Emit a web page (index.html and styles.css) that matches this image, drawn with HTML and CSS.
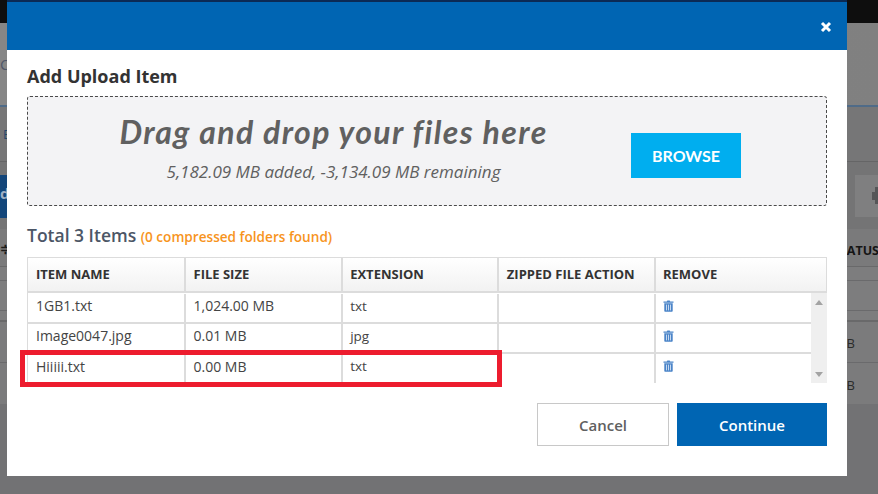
FILE: index.html
```html
<!DOCTYPE html>
<html lang="en">
<head>
<meta charset="utf-8">
<title>Add Upload Item</title>
<link rel="stylesheet" href="styles.css">
</head>
<body>
<div class="backdrop">
  <div class="band b-top"></div>
  <div class="band b-nav"><span class="bg-c">C</span></div>
  <div class="band b-tabs"><span class="bg-e">E</span></div>
  <div class="band b-tools">
    <div class="bg-btn">d</div>
    <div class="bg-tool"><svg class="bg-print" viewBox="0 0 12 17"><path d="M3 0 H9 V5 H12 V13 H9 V17 H3 V13 H0 V5 H3 Z"/></svg></div>
  </div>
  <div class="band b-head"><span class="bg-sort">≑</span><span class="bg-status">STATUS</span></div>
  <div class="band b-r1"></div>
  <div class="band b-r2"></div>
  <div class="band b-r3"></div>
  <div class="band b-r4"><span></span><span class="bg-b">B</span></div>
  <div class="band b-r5"><span></span><span class="bg-b">B</span></div>
</div>
<div class="top-edge"></div>
<div class="modal">
  <header class="modal-head">
    <svg class="close" viewBox="0 0 12 12" aria-label="Close"><path d="M2 2 L10 10 M10 2 L2 10"/></svg>
  </header>
  <div class="modal-body">
    <h2 class="title">Add Upload Item</h2>
    <section class="drop">
      <div class="drop-text">
        <div class="drop-main">Drag and drop your files here</div>
        <div class="drop-sub">5,182.09 MB added, -3,134.09 MB remaining</div>
      </div>
      <button class="browse">BROWSE</button>
    </section>
    <div class="total">Total 3 Items <span class="found">(0 compressed folders found)</span></div>
    <div class="table">
      <div class="row head">
        <div class="cell c1">ITEM NAME</div>
        <div class="cell c2">FILE SIZE</div>
        <div class="cell c3">EXTENSION</div>
        <div class="cell c4">ZIPPED FILE ACTION</div>
        <div class="cell c5">REMOVE</div>
      </div>
      <div class="scroll-wrap">
        <div class="rows">
          <div class="row">
            <div class="cell c1">1GB1.txt</div>
            <div class="cell c2">1,024.00 MB</div>
            <div class="cell c3 ext">txt</div>
            <div class="cell c4"></div>
            <div class="cell c5"><svg class="trash" viewBox="0 0 11 12"><path d="M3.8 1.6 L4.3.5 H6.7 L7.2 1.6 H10.5 V2.7 H.5 V1.6 Z M1.3 3.3 H9.7 V11 Q9.7 11.8 8.9 11.8 H2.1 Q1.3 11.8 1.3 11 Z"/><path class="bars" d="M3.5 4.6 V10.4 M5.5 4.6 V10.4 M7.5 4.6 V10.4"/></svg></div>
          </div>
          <div class="row">
            <div class="cell c1">Image0047.jpg</div>
            <div class="cell c2">0.01 MB</div>
            <div class="cell c3 ext">jpg</div>
            <div class="cell c4"></div>
            <div class="cell c5"><svg class="trash" viewBox="0 0 11 12"><path d="M3.8 1.6 L4.3.5 H6.7 L7.2 1.6 H10.5 V2.7 H.5 V1.6 Z M1.3 3.3 H9.7 V11 Q9.7 11.8 8.9 11.8 H2.1 Q1.3 11.8 1.3 11 Z"/><path class="bars" d="M3.5 4.6 V10.4 M5.5 4.6 V10.4 M7.5 4.6 V10.4"/></svg></div>
          </div>
          <div class="row last">
            <div class="cell c1">Hiiiii.txt</div>
            <div class="cell c2">0.00 MB</div>
            <div class="cell c3 ext">txt</div>
            <div class="cell c4"></div>
            <div class="cell c5"><svg class="trash" viewBox="0 0 11 12"><path d="M3.8 1.6 L4.3.5 H6.7 L7.2 1.6 H10.5 V2.7 H.5 V1.6 Z M1.3 3.3 H9.7 V11 Q9.7 11.8 8.9 11.8 H2.1 Q1.3 11.8 1.3 11 Z"/><path class="bars" d="M3.5 4.6 V10.4 M5.5 4.6 V10.4 M7.5 4.6 V10.4"/></svg></div>
          </div>
        </div>
        <div class="scrollbar">
          <svg class="arrow" viewBox="0 0 8 5"><path d="M4 0 L8 5 H0 Z"/></svg>
          <svg class="arrow" viewBox="0 0 8 5"><path d="M0 0 H8 L4 5 Z"/></svg>
        </div>
      </div>
      <div class="highlight"></div>
    </div>
    <div class="actions">
      <button class="btn cancel">Cancel</button>
      <button class="btn continue">Continue</button>
    </div>
  </div>
</div>
</body>
</html>
```
FILE: styles.css
```css
* { box-sizing: border-box; }
html, body { margin: 0; padding: 0; width: 878px; height: 494px; overflow: hidden; }
body { position: relative; background: #727274; font-family: "Open Sans", sans-serif; color: #333; }

.backdrop { display: flex; flex-direction: column; height: 494px; background: #727274; overflow: hidden; }
.band { display: flex; justify-content: space-between; align-items: center; flex: none; border-bottom: 1px solid #6a6a6c; background: #7b7b7c; }
.b-top { height: 23px; background: #0e0e0e; border: 0; }
.b-nav { height: 84px; background: linear-gradient(90deg, #868686, #808080); border-bottom: 2px solid #4f6b88; }
.b-tabs { height: 55px; background: #767677; border-bottom: 1px solid #656566; }
.b-tools { height: 67px; background: #747475; border: 0; align-items: flex-start; padding-top: 13px; }
.b-head { height: 38px; border-bottom: 1px solid #69696a; background: #7a7a7b; }
.b-r1 { height: 14px; background: #7d7d7e; }
.b-r2 { height: 30px; background: #7d7d7e; }
.b-r3 { height: 11px; background: #7d7d7e; border-bottom: 2px solid #69696a; }
.b-r4 { height: 41px; }
.b-r5 { height: 41px; border: 0; }
.bg-c { font-size: 15px; color: #50586a; }
.bg-e { font-size: 13px; color: #26466b; margin-left: 3px; }
.bg-btn { width: 7px; height: 43px; background: #13467a; color: #9fb0c4; font-size: 15px; font-weight: 700; line-height: 36px; text-align: right; overflow: hidden; }
.bg-tool { width: 23px; height: 42px; background: #7f7f80; overflow: hidden; padding: 12px 0 0 17px; }
.bg-print { display: block; width: 12px; height: 17px; fill: #565658; }
.bg-sort { font-size: 13px; font-weight: 700; color: #1c1c1c; }
.bg-status { font-size: 12.5px; font-weight: 700; color: #151515; margin: 5px -1px 0 0; }
.bg-b { font-size: 13px; color: #2b2b2b; margin: 2px 23px 0 0; }

.top-edge { position: absolute; left: 7px; top: 0; width: 840px; height: 2px; background: #0b2a55; }
.modal { position: absolute; left: 7px; top: 2px; width: 840px; height: 474px; background: #fff; display: flex; flex-direction: column; }
.modal-head { height: 48px; background: #0065b3; display: flex; justify-content: flex-end; align-items: flex-start; padding: 19px 15px 0 0; flex: none; }
.close { width: 12px; height: 12px; fill: none; stroke: #fff; stroke-width: 3; }

.modal-body { padding: 15px 20px 0; display: flex; flex-direction: column; }
.title { margin: 0; font-size: 18px; line-height: 23px; font-weight: 700; color: #333; }

.drop { margin-top: 8px; height: 110px; background: #f3f3f5; border: 1px dashed #4a4a4a; border-radius: 3px; display: flex; align-items: center; padding: 0 85px 0 4px; }
.drop-text { width: 603px; margin-right: -4px; text-align: center; flex: none; padding-bottom: 6px; }
.drop-main { font-family: "Lato", sans-serif; font-size: 32px; line-height: 38px; font-weight: 700; font-style: italic; letter-spacing: 1.4px; color: #606060; white-space: nowrap; }
.drop-sub { font-size: 17px; line-height: 22px; font-style: italic; color: #606060; margin-top: 10px; }
.browse { margin-left: auto; margin-top: 9px; width: 110px; height: 45px; flex: none; border: 0; background: #00aeef; color: #fff; font-family: "Lato", sans-serif; font-size: 16px; font-weight: 700; padding: 0; }

.total { margin-top: 17px; height: 24px; font-size: 17.5px; line-height: 24px; font-weight: 600; color: #4c5666; }
.found { font-size: 13.6px; line-height: 1; font-weight: 600; color: #f7941d; }

.table { position: relative; margin-top: 10px; width: 800px; }
.row { display: flex; height: 30px; border-bottom: 2px solid #dcdcdc; font-size: 14px; color: #444; }
.row.last { border-bottom: 0; height: 29px; }
.row.head { height: 36px; border: 1px solid #dcdcdc; border-bottom-width: 2px; background: linear-gradient(#fff, #f2f2f2); font-size: 13px; font-weight: 700; color: #333; }
.row.head .cell { padding-bottom: 1px; }
.cell { padding: 0 0 5px 7.5px; display: flex; align-items: center; border-right: 2px solid #dcdcdc; flex: none; white-space: nowrap; }
.ext { font-size: 13.5px; }
.c1 { width: 158px; padding-left: 8px; }
.c2, .c3, .c4 { width: 156.67px; }
.c5 { flex: 1; border-right: 0; padding-left: 7px; }

.scroll-wrap { display: flex; height: 90px; }
.rows { width: 784px; padding-top: 1px; border-left: 1px solid #dcdcdc; }
.scrollbar { width: 16px; background: #efefef; display: flex; flex-direction: column; justify-content: space-between; align-items: center; padding: 7px 0 6px; }
.arrow { width: 8px; height: 5px; fill: #a3a3a3; }

.trash { width: 11px; height: 12px; fill: #4a84c8; display: block; }
.trash .bars { fill: none; stroke: #c4d8f0; stroke-width: 1; }

.highlight { position: absolute; left: -7px; top: 93px; width: 482px; height: 37px; border: 5px solid #ed1c2e; pointer-events: none; }

.actions { display: flex; justify-content: flex-end; gap: 8px; margin-top: 20px; }
.btn { width: 132px; height: 43px; font-family: "Open Sans", sans-serif; font-size: 15px; font-weight: 600; padding: 0; }
.cancel { background: #fff; border: 1px solid #c8c8c8; color: #606060; }
.continue { width: 150px; background: #0065b3; border: 0; color: #fff; }
```
